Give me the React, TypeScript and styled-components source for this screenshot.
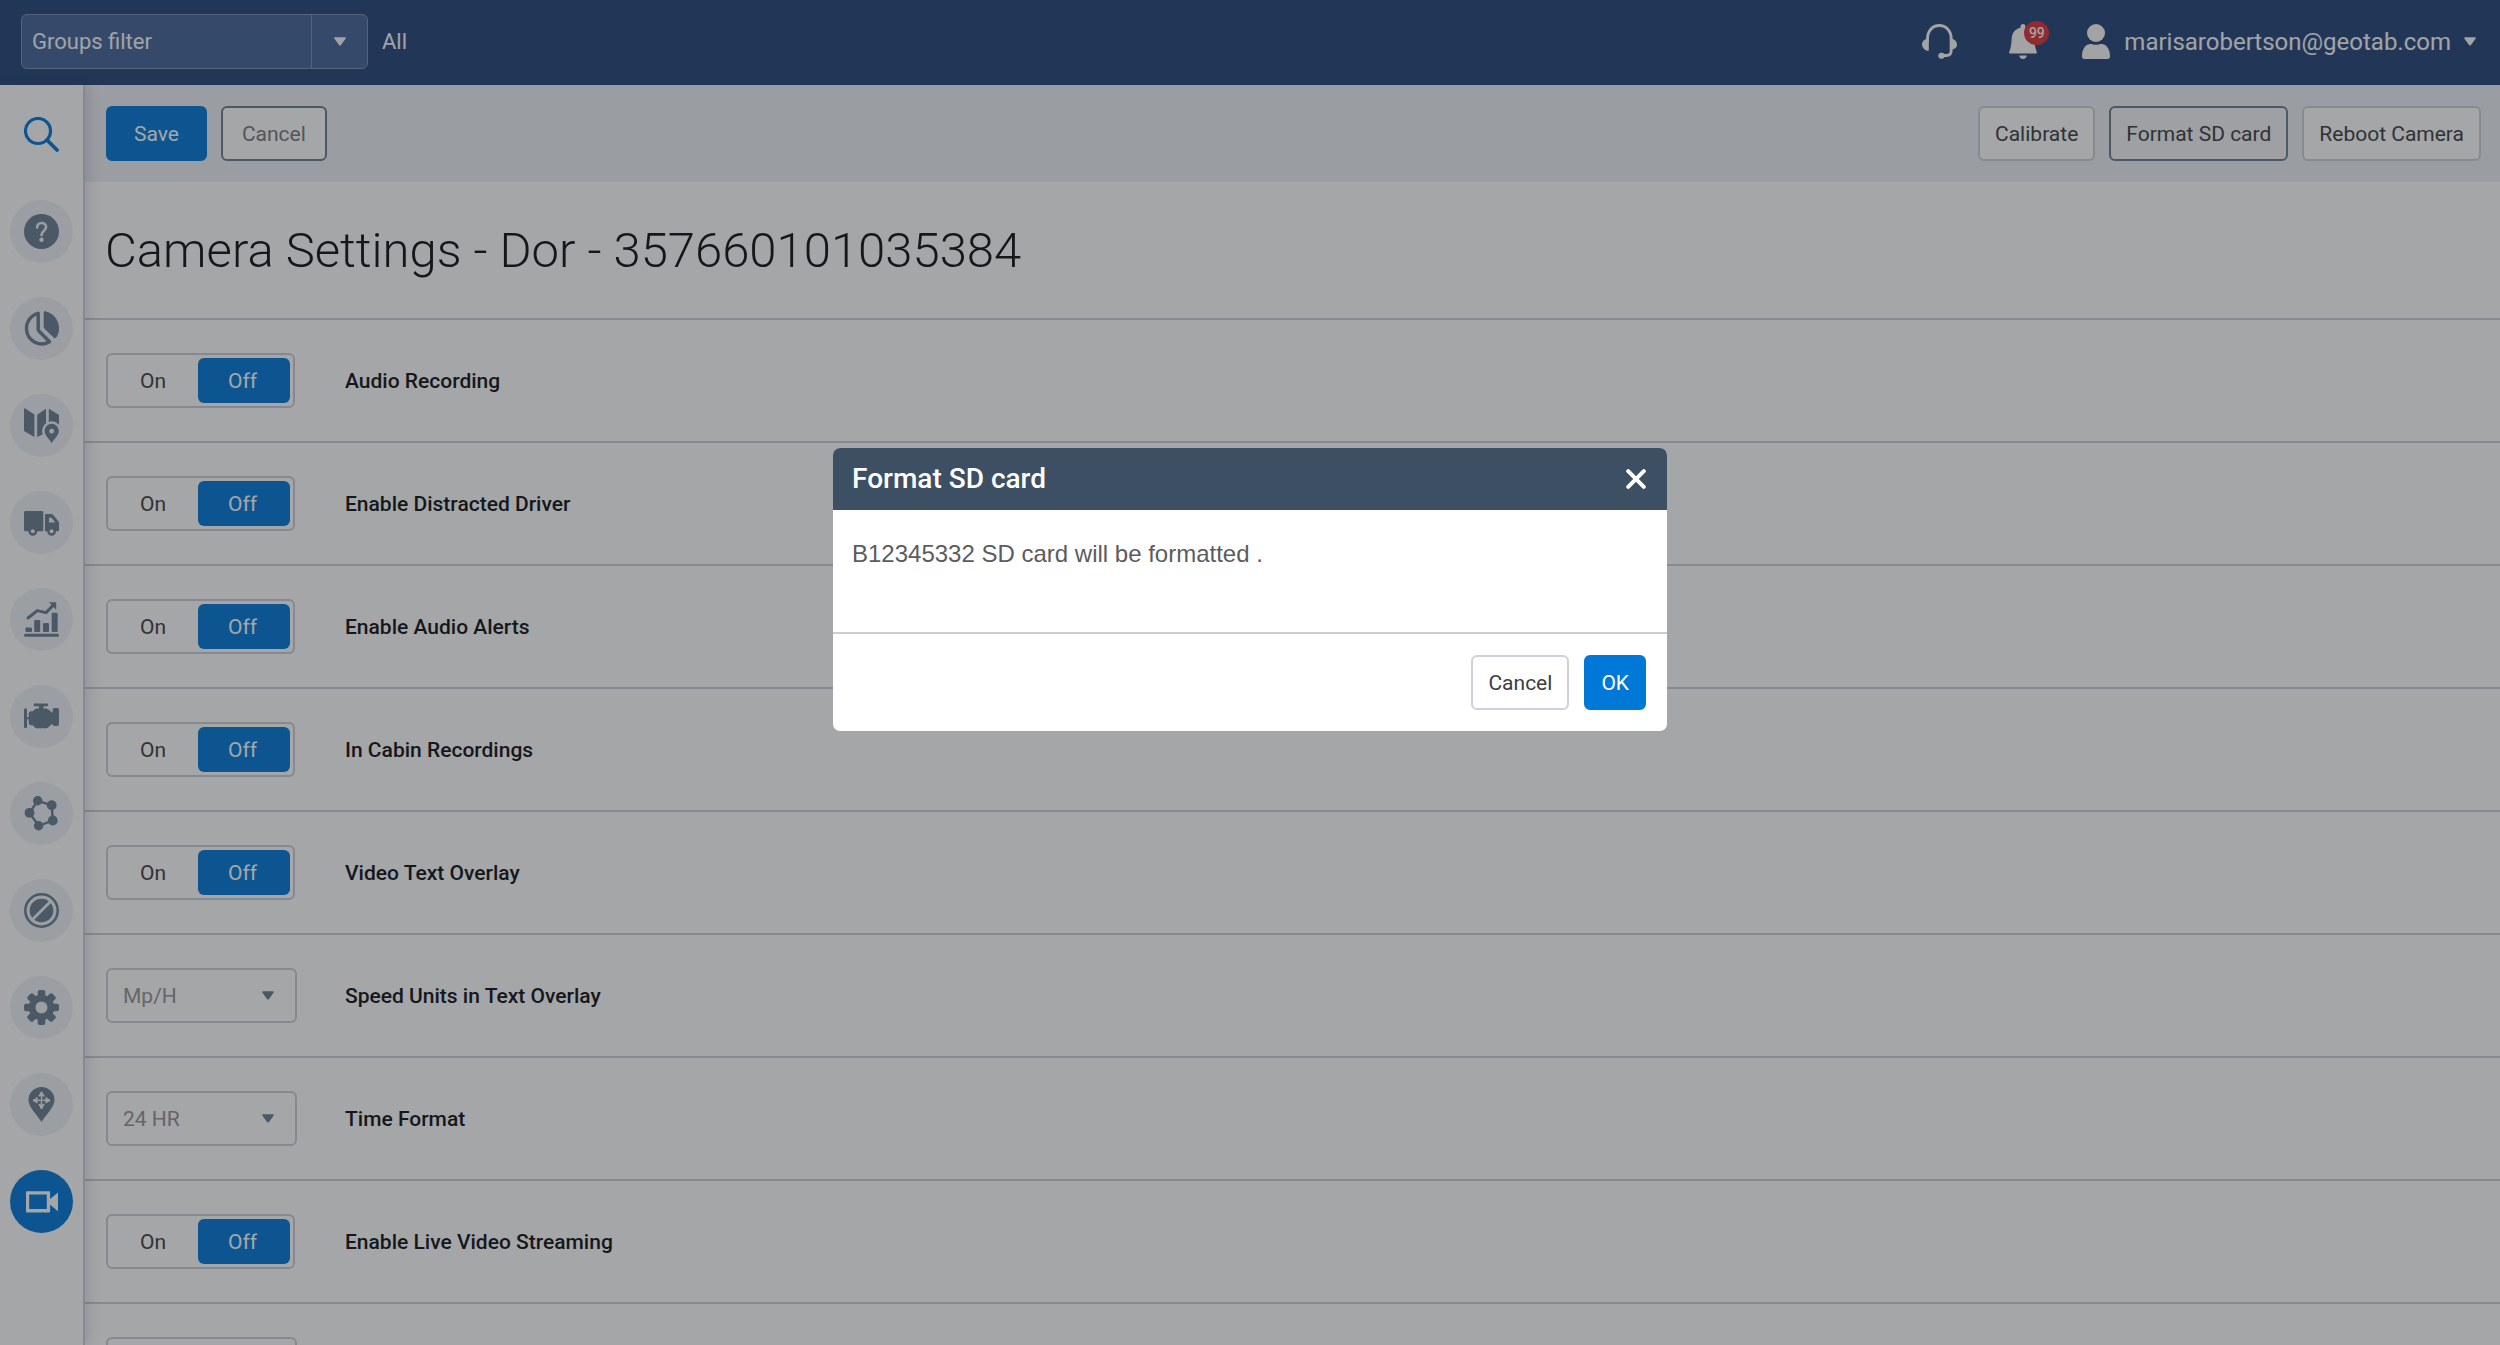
import React, { useState } from "react";
import styled, { createGlobalStyle, css } from "styled-components";

const c = {
  navy: "#25477b",
  blue: "#0078d7",
  slate: "#697d91",
  disc: "#eef2f7",
  line: "#cdced9",
  toolbar: "#edf1f5",
  text: "#3c3e42",
  ink: "#101216",
  muted: "#929498",
};

const Global = createGlobalStyle`
  *, *::before, *::after { box-sizing: border-box; }
  html, body, #root { height: 100%; }
  body {
    margin: 0;
    overflow: hidden;
    background: #fff;
    color: ${c.text};
    font: 21px/24px Roboto, "Liberation Sans", sans-serif;
  }
  button, input, select { font: inherit; color: inherit; margin: 0; }
  button { cursor: pointer; }
`;

const Page = styled.div`
  display: flex;
  flex-direction: column;
  height: 100vh;
`;

/* ---------- top bar ---------- */

const TopBar = styled.header`
  flex: none;
  display: flex;
  align-items: center;
  justify-content: space-between;
  height: 85px;
  padding: 0 24px 2px 21px;
  background: ${c.navy};
  color: #fafafa;
`;

const FilterArea = styled.div`
  display: flex;
  align-items: center;
  gap: 14px;
  font-size: 22px;
`;

const FilterBox = styled.div`
  display: flex;
  width: 347px;
  height: 55px;
  border: 1px solid #7b90b4;
  border-radius: 6px;
  background: #45669a;
  overflow: hidden;
`;

const FilterInput = styled.input`
  flex: 1;
  min-width: 0;
  padding: 0 10px;
  border: 0;
  background: none;
  outline: none;
  &::placeholder { color: #fafafa; opacity: 1; }
`;

const FilterToggle = styled.button`
  display: grid;
  place-items: center;
  width: 56px;
  padding: 0;
  border: 0;
  border-left: 1px solid #7b90b4;
  background: none;
`;

const AccountArea = styled.div`
  display: flex;
  align-items: center;
`;

const BarButton = styled.button<{ $gap: number }>`
  position: relative;
  display: flex;
  margin-right: ${(p) => p.$gap}px;
  padding: 0;
  border: 0;
  background: none;
`;

const Badge = styled.span`
  position: absolute;
  top: -3px;
  left: 15px;
  width: 25px;
  height: 24px;
  border-radius: 50%;
  background: #dd3236;
  font-size: 14px;
  font-weight: 500;
  line-height: 24px;
  text-align: center;
`;

const AccountButton = styled.button`
  display: flex;
  align-items: center;
  padding: 0;
  border: 0;
  background: none;
  font-size: 24px;
`;

const AccountName = styled.span`
  margin: 0 13px 0 14px;
`;

/* ---------- sidebar ---------- */

const Body = styled.div`
  flex: 1;
  display: flex;
  min-height: 0;
`;

const Sidebar = styled.nav`
  position: relative;
  z-index: 1;
  flex: none;
  display: flex;
  flex-direction: column;
  align-items: center;
  gap: 34px;
  width: 85px;
  padding-top: 18px;
  border-right: 2px solid ${c.line};
  background: #fff;
  box-shadow: 2px 0 14px rgba(20, 24, 40, 0.16);
`;

const NavLink = styled.a<{ $disc?: string }>`
  flex: none;
  display: grid;
  place-items: center;
  width: 63px;
  height: 63px;
  border-radius: 50%;
  background: ${(p) => p.$disc || "transparent"};
  color: ${c.slate};
`;

/* ---------- main ---------- */

const Main = styled.main`
  flex: 1;
  min-width: 0;
  overflow: hidden;
`;

const Toolbar = styled.div`
  display: flex;
  align-items: center;
  justify-content: space-between;
  height: 97px;
  padding: 0 19px 0 21px;
  background: ${c.toolbar};
`;

const ButtonGroup = styled.div`
  display: flex;
  gap: 14px;
`;

type Tone = "primary" | "default" | "quiet" | "pressed";

const tones = {
  primary: css`border-color: ${c.blue}; background: ${c.blue}; color: #fff;`,
  default: css`border-color: #ccd1da; background: #fff;`,
  quiet: css`border-color: ${c.slate}; background: #fff; color: #77797d;`,
  pressed: css`border-color: ${c.slate}; background: #f4f5f8;`,
};

const pads = { medium: 15, large: 19, wide: 26 };

const Button = styled.button<{ $tone: Tone; $pad?: keyof typeof pads }>`
  height: 55px;
  padding: 0 ${(p) => pads[p.$pad || "medium"]}px;
  border: 2px solid;
  border-radius: 6px;
  color: ${c.text};
  ${(p) => tones[p.$tone]}
`;

const Title = styled.h1`
  margin: 0;
  padding: 37px 20px 35px;
  font-size: 49px;
  font-weight: 300;
  line-height: 64px;
  color: ${c.ink};
`;

const Row = styled.div`
  display: grid;
  grid-template-columns: 191px 1fr;
  column-gap: 48px;
  align-items: center;
  height: 123px;
  padding: 0 21px;
  border-top: 2px solid ${c.line};
`;

const labelStyle = css`
  font-weight: 500;
  color: ${c.ink};
`;
const RowLabel = styled.label`${labelStyle}`;
const RowName = styled.span`${labelStyle}`;

const Switch = styled.div`
  display: grid;
  grid-template-columns: 1fr 92px;
  width: 189px;
  height: 55px;
  padding: 3px;
  border: 2px solid ${c.line};
  border-radius: 6px;
`;

const SwitchOption = styled.label<{ $on: boolean }>`
  position: relative;
  display: grid;
  place-items: center;
  padding-right: 3px;
  border-radius: 6px;
  cursor: pointer;
  ${(p) => p.$on && css`background: ${c.blue}; color: #fff;`}
`;

const HiddenRadio = styled.input`
  position: absolute;
  inset: 0;
  opacity: 0;
`;

const SelectBox = styled.div`
  display: grid;
  align-items: center;
  color: ${c.muted};
  & > * { grid-area: 1 / 1; }
  & > svg { justify-self: end; margin-right: 23px; color: ${c.slate}; pointer-events: none; }
`;

const Select = styled.select`
  appearance: none;
  width: 100%;
  height: 55px;
  padding: 0 15px;
  border: 2px solid ${c.line};
  border-radius: 6px;
  background: #fff;
`;

/* ---------- dialog ---------- */

const Backdrop = styled.div`
  position: fixed;
  inset: 0;
  z-index: 10;
  display: flex;
  justify-content: center;
  align-items: flex-start;
  padding-top: 448px;
  background: rgba(30, 33, 38, 0.4);
`;

const Dialog = styled.section`
  width: 834px;
  border-radius: 7px;
  background: #fff;
  overflow: hidden;
`;

const DialogHead = styled.header`
  display: flex;
  align-items: center;
  justify-content: space-between;
  height: 62px;
  padding: 0 21px 0 19px;
  background: #3c4f63;
  color: #fff;
`;

const DialogTitle = styled.h2`
  margin: 0;
  font-size: 28px;
  font-weight: 500;
  line-height: 32px;
`;

const CloseButton = styled.button`
  display: flex;
  padding: 0;
  border: 0;
  background: none;
`;

const DialogText = styled.p`
  margin: 0;
  padding: 29px 19px 63px;
  font: 24px/30px "Liberation Sans", Arial, sans-serif;
  color: #5c5c5c;
`;

const DialogFoot = styled.footer`
  display: flex;
  justify-content: flex-end;
  gap: 15px;
  padding: 21px;
  border-top: 2px solid #c8cdd6;
`;

/* ---------- icons ---------- */

const Caret = () => (
  <svg width="12" height="9" viewBox="0 0 12 9" fill="currentColor" aria-hidden="true">
    <path d="M1 .3h10c.7 0 1.100.7.7 1.300L6.800 8.200c-.4.500-1.200.5-1.600 0L.3 1.600C-.1 1 .3.3 1 .3z" />
  </svg>
);

const Icon = ({ children, size = 35, width = 35 }: { children: React.ReactNode; size?: number; width?: number }) => (
  <svg width={width} height={size} viewBox={`0 0 ${width} ${size}`} fill="currentColor" aria-hidden="true">
    {children}
  </svg>
);

const Headset = () => (
  <Icon>
    <path d="M5.500 18V14.500C5.500 7 10.500 1.500 17.300 1.500S29.200 7 29.200 14.500V26.500c0 3.300-1.800 5-4.600 5H20" fill="none" stroke="currentColor" strokeWidth="2.800" />
    <path d="M6.800 14.500v12.200H5C2 25.500 0 23.500 0 20.500s2-5 5-6zM27.800 14.500v11.200h1.800c3.400-.7 5.400-2.200 5.400-5.200s-2-5-5.400-6z" />
    <rect x="16.300" y="28.700" width="6.400" height="6" rx="3" />
  </Icon>
);

const Bell = () => (
  <Icon width={28}>
    <path d="M11.500 2.500C11.500 1 12.500 0 14 0s2.500 1 2.500 2.500v1.200C22 4.800 25 9 25.300 14.500c.3 6 .9 9.500 2.500 13.500.2.900-.3 1.500-1.200 1.500H1.400C.5 29.500 0 28.900.2 28c1.600-4 2.200-7.500 2.500-13.500C3 9 6 4.800 11.500 3.700zM10.300 31.500h7.400c0 2-1.700 3.500-3.700 3.500s-3.700-1.500-3.700-3.500z" />
  </Icon>
);

const Person = () => (
  <Icon width={28}>
    <circle cx="14" cy="9" r="9" />
    <path d="M0 32c0-7.500 4-12 8.500-12 1.800 0 3 .8 5.500.8s3.700-.8 5.500-.8C24 20 28 24.500 28 32c0 2-.8 3-2.500 3h-23C.8 35 0 34 0 32z" />
  </Icon>
);

const Search = () => (
  <Icon>
    <circle cx="14" cy="14" r="12.500" fill="none" stroke={c.blue} strokeWidth="3.200" />
    <path d="M23 23l10 10" stroke={c.blue} strokeWidth="3.800" strokeLinecap="round" />
  </Icon>
);

const Help = () => (
  <Icon>
    <circle cx="17.500" cy="17.500" r="17.500" />
    <path d="M13.100 13.400c0-2.700 1.900-4.400 4.500-4.400s4.500 1.700 4.500 4.100c0 3.600-4.600 3.700-4.600 8" fill="none" stroke={c.disc} strokeWidth="2.600" strokeLinecap="round" />
    <circle cx="17.500" cy="25.800" r="2.200" fill={c.disc} />
  </Icon>
);

const Pie = () => (
  <Icon>
    <path d="M19.700 1.600c0-1 .7-1.600 1.700-1.400C29.300 2 35 9 35 17.300c0 3.600-1 7-2.800 9.300-.5.800-1.500.9-2.100.3L20.300 17.400c-.4-.4-.6-.9-.6-1.400z" />
    <path d="M14.200 2.300A15.600 15.600 0 0 0 17.500 33c2.800 0 5.500-.8 8-2.300L14.900 20c-.5-.5-.7-1-.7-1.600z" fill="none" stroke="currentColor" strokeWidth="3.400" strokeLinejoin="round" />
  </Icon>
);

const MapPin = () => (
  <Icon>
    <path d="M0 1.200C0 .5.500.1 1.200.500l9.200 6V29L.7 23.500C.2 23.200 0 22.800 0 22.300zM13.200 6.800L22 .8v24l-8.800 4.200zM24.800.8L34.300 6.400c.5.300.7.700.7 1.200V20H24.800z" />
    <path d="M27.700 35c-2-3.300-7.200-8-7.200-12a7.200 7.200 0 0 1 14.400 0c0 4-5.200 8.700-7.200 12z" stroke={c.disc} strokeWidth="5" />
    <path d="M27.700 35c-2-3.300-7.200-8-7.200-12a7.200 7.200 0 0 1 14.400 0c0 4-5.200 8.700-7.200 12z" />
    <circle cx="27.700" cy="23.200" r="2.400" fill={c.disc} />
  </Icon>
);

const Truck = () => (
  <Icon>
    <rect x="0" y="6" width="19.300" height="20.200" rx="1.500" />
    <path d="M22.300 9h5c.8 0 1.400.3 2 .9l5 6.300c.5.600.7 1.200.7 2v6.800c0 .8-.4 1.200-1.200 1.200H21V10.300c0-.8.500-1.300 1.300-1.300z" />
    <path d="M25 12.800h2.600l3.600 4.700H25z" fill={c.disc} />
    <circle cx="8.800" cy="26.300" r="4.400" />
    <circle cx="27.600" cy="26.300" r="4.400" />
    <circle cx="8.800" cy="26.300" r="2" fill={c.disc} />
    <circle cx="27.600" cy="26.300" r="2" fill={c.disc} />
  </Icon>
);

const Trend = () => (
  <Icon>
    <rect x="1.500" y="25.500" width="6.500" height="4.500" rx="1" />
    <rect x="10.200" y="18" width="6" height="12" rx="1" />
    <rect x="19" y="21" width="6" height="9" rx="1" />
    <rect x="27.700" y="10.800" width="6" height="19.200" rx="1" />
    <rect x="0" y="31.700" width="35" height="3" rx="1.500" />
    <path d="M4 16l9.300-7.400 8.700 2L28.500 4" fill="none" stroke="currentColor" strokeWidth="3" strokeLinecap="round" strokeLinejoin="round" />
    <path d="M25 .3h6.200c.6 0 1 .4 1 1v6.500z" />
  </Icon>
);

const Engine = () => (
  <Icon>
    <rect x="0" y="9.500" width="3" height="19.500" rx="1" />
    <rect x="9.700" y="4.500" width="14.400" height="2.800" rx="1.200" />
    <path d="M15 7h4.500v3H15zM3 18.200h2.500v2H3z" />
    <path d="M4.700 15c0-1.800.8-2.700 2.500-2.700h1.500L11 10.200c.6-.5 1.300-.8 2-.8h9c.8 0 1.500.3 2 .8l3.800 3.300h1.400v11.700h-1.400L24 28.500c-.5.500-1.200.7-2 .7h-9c-.8 0-1.500-.2-2-.8l-2.300-2.200H7.200c-1.700 0-2.500-.9-2.500-2.600z" />
    <rect x="28.600" y="9" width="6.400" height="18" rx="2" />
  </Icon>
);

const Network = () => (
  <Icon>
    <path d="M13.700 4.800l14 4.400 1.100 15.300-14.200 5.300-9.100-13z" fill="none" stroke="currentColor" strokeWidth="2.400" />
    <circle cx="13.700" cy="4.800" r="4.700" />
    <circle cx="27.700" cy="9.200" r="4.900" />
    <circle cx="28.800" cy="24.500" r="4.900" />
    <circle cx="14.600" cy="29.800" r="4.700" />
    <circle cx="5.500" cy="16.800" r="4.900" />
  </Icon>
);

const Ban = () => (
  <Icon>
    <circle cx="17.500" cy="17.500" r="16.200" fill="none" stroke="currentColor" strokeWidth="2.500" />
    <circle cx="17.500" cy="17.500" r="11.800" />
    <path d="M8 27L27 8" stroke={c.disc} strokeWidth="2.800" />
  </Icon>
);

const Gear = () => (
  <Icon>
    {[0, 45, 90, 135].map((a) => (
      <rect key={a} x="13.700" y="0" width="7.600" height="35" rx="2" transform={`rotate(${a} 17.500 17.500)`} />
    ))}
    <circle cx="17.500" cy="17.500" r="12.800" />
    <circle cx="17.500" cy="17.500" r="6" fill={c.disc} />
  </Icon>
);

const Waypoint = () => (
  <Icon>
    <path d="M17.500 35C14 28.500 4.500 20.500 4.500 13a13 13 0 0 1 26 0c0 7.500-9.500 15.500-13 22z" />
    {[0, 90, 180, 270].map((a) => (
      <path key={a} d="M17 13.300l-.4-4.300-1.800.8-.3-1.500 1.400-1.500.7-2.100h1.800l.7 2.100 1.400 1.500-.3 1.500-1.800-.8-.4 4.300z" fill={c.disc} transform={`rotate(${a} 17.500 13.300)`} />
    ))}
  </Icon>
);

const Camera = () => (
  <Icon>
    <path fillRule="evenodd" fill="#fff" d="M3.300 7.200h21.500c.8 0 1.300.5 1.300 1.300v6.400L34 8.500v18.700l-7.900-6.400v6.400c0 .8-.5 1.300-1.300 1.300H3.300c-.8 0-1.300-.5-1.300-1.300V8.500c0-.8.5-1.300 1.300-1.300zm1.900 3.400v14.500h17.600V10.600z" />
  </Icon>
);

const Close = () => (
  <Icon size={20} width={20}>
    <path d="M2.200 2.200l15.600 15.600M17.800 2.200L2.200 17.800" stroke="#fff" strokeWidth="4" strokeLinecap="round" />
  </Icon>
);

/* ---------- parts ---------- */

const navItems = [
  { name: "Help", icon: <Help /> },
  { name: "Dashboard", icon: <Pie /> },
  { name: "Map", icon: <MapPin /> },
  { name: "Vehicles", icon: <Truck /> },
  { name: "Activity", icon: <Trend /> },
  { name: "Engine", icon: <Engine /> },
  { name: "Zones", icon: <Network /> },
  { name: "Rules", icon: <Ban /> },
  { name: "Administration", icon: <Gear /> },
  { name: "Places", icon: <Waypoint /> },
];

const OnOff = ({ id, label }: { id: string; label: string }) => {
  const [value, setValue] = useState("Off");
  return (
    <Row>
      <Switch role="radiogroup" aria-labelledby={id}>
        {["On", "Off"].map((v) => (
          <SwitchOption key={v} $on={value === v}>
            <HiddenRadio type="radio" name={id} checked={value === v} onChange={() => setValue(v)} />
            {v}
          </SwitchOption>
        ))}
      </Switch>
      <RowName id={id}>{label}</RowName>
    </Row>
  );
};

const Choice = ({ id, label, options }: { id: string; label: string; options: string[] }) => (
  <Row>
    <SelectBox>
      <Select id={id}>
        {options.map((o) => (
          <option key={o}>{o}</option>
        ))}
      </Select>
      <Caret />
    </SelectBox>
    <RowLabel htmlFor={id}>{label}</RowLabel>
  </Row>
);

export default function App() {
  const [open, setOpen] = useState(true);
  const close = () => setOpen(false);

  return (
    <>
      <Global />
      <Page>
        <TopBar>
          <FilterArea>
            <FilterBox>
              <FilterInput aria-label="Groups filter" placeholder="Groups filter" />
              <FilterToggle aria-label="Show groups"><Caret /></FilterToggle>
            </FilterBox>
            <span>All</span>
          </FilterArea>
          <AccountArea>
            <BarButton $gap={52} aria-label="Support"><Headset /></BarButton>
            <BarButton $gap={45} aria-label="Notifications">
              <Bell />
              <Badge>99</Badge>
            </BarButton>
            <AccountButton>
              <Person />
              <AccountName>marisarobertson@geotab.com</AccountName>
              <Caret />
            </AccountButton>
          </AccountArea>
        </TopBar>

        <Body>
          <Sidebar aria-label="Main">
            <NavLink href="#search" aria-label="Search"><Search /></NavLink>
            {navItems.map((n) => (
              <NavLink key={n.name} href={`#${n.name.toLowerCase()}`} aria-label={n.name} $disc={c.disc}>
                {n.icon}
              </NavLink>
            ))}
            <NavLink href="#camera" aria-label="Camera" aria-current="page" $disc={c.blue}><Camera /></NavLink>
          </Sidebar>

          <Main>
            <Toolbar>
              <ButtonGroup>
                <Button $tone="primary" $pad="wide">Save</Button>
                <Button $tone="quiet" $pad="large">Cancel</Button>
              </ButtonGroup>
              <ButtonGroup>
                <Button $tone="default">Calibrate</Button>
                <Button $tone="pressed" onClick={() => setOpen(true)}>Format SD card</Button>
                <Button $tone="default">Reboot Camera</Button>
              </ButtonGroup>
            </Toolbar>
            <Title>Camera Settings - Dor - 357660101035384</Title>
            <OnOff id="audio-recording" label="Audio Recording" />
            <OnOff id="distracted-driver" label="Enable Distracted Driver" />
            <OnOff id="audio-alerts" label="Enable Audio Alerts" />
            <OnOff id="cabin-recordings" label="In Cabin Recordings" />
            <OnOff id="text-overlay" label="Video Text Overlay" />
            <Choice id="speed-units" label="Speed Units in Text Overlay" options={["Mp/H", "Km/H"]} />
            <Choice id="time-format" label="Time Format" options={["24 HR", "12 HR"]} />
            <OnOff id="live-streaming" label="Enable Live Video Streaming" />
            <Row>
              <Select aria-label="Video quality" />
            </Row>
          </Main>
        </Body>
      </Page>

      {open && (
        <Backdrop>
          <Dialog role="dialog" aria-modal="true" aria-labelledby="dialog-title">
            <DialogHead>
              <DialogTitle id="dialog-title">Format SD card</DialogTitle>
              <CloseButton aria-label="Close" onClick={close}><Close /></CloseButton>
            </DialogHead>
            <DialogText>B12345332 SD card will be formatted .</DialogText>
            <DialogFoot>
              <Button $tone="default" onClick={close}>Cancel</Button>
              <Button $tone="primary" onClick={close}>OK</Button>
            </DialogFoot>
          </Dialog>
        </Backdrop>
      )}
    </>
  );
}
